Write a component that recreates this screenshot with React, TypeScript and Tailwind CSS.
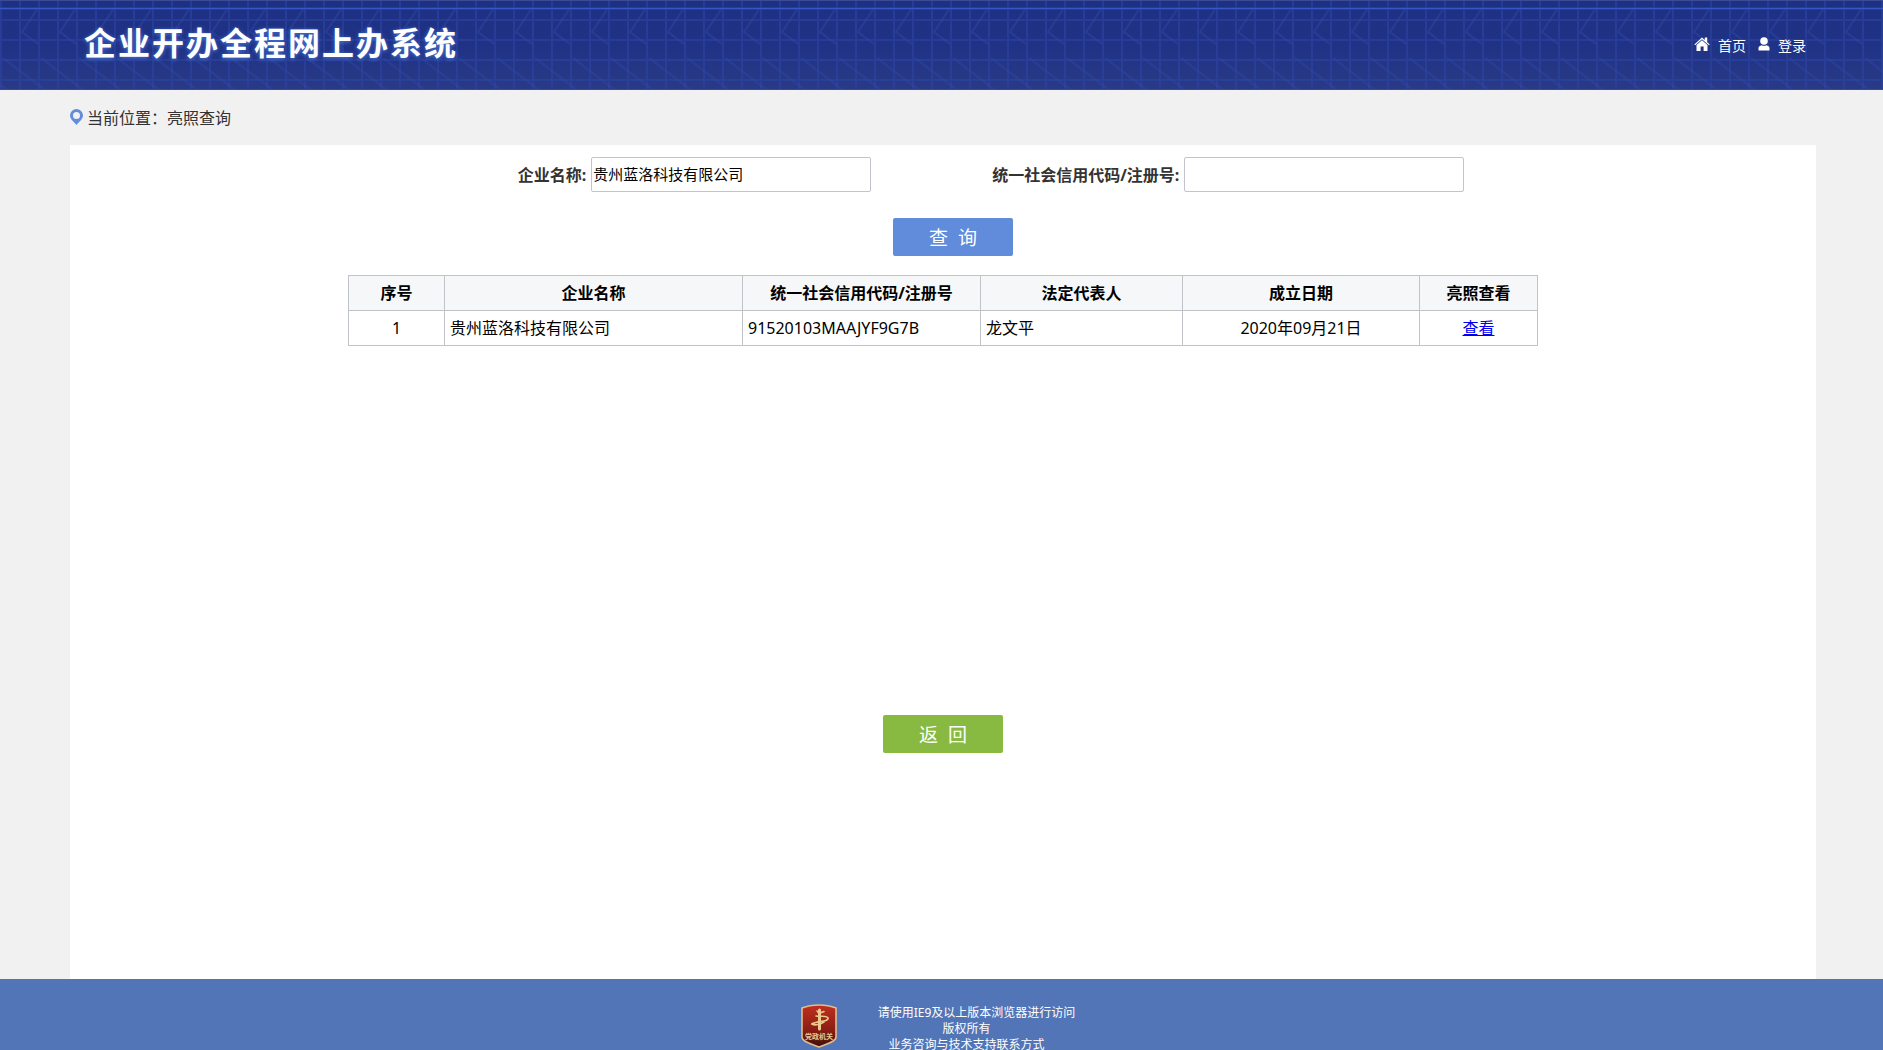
import React, { useState } from "react"

const rows = [
  {
    name: "贵州蓝洛科技有限公司",
    code: "91520103MAAJYF9G7B",
    person: "龙文平",
    date: "2020年09月21日"
  }
]

const HeaderPattern: React.FC = () => (
  <svg className="absolute inset-0 w-full h-full" aria-hidden="true">
    <defs>
      <linearGradient id="sky" x1="0" y1="0" x2="0" y2="1">
        <stop offset="0" stopColor="#1d3082" />
        <stop offset="0.5" stopColor="#203285" />
        <stop offset="1" stopColor="#293a85" />
      </linearGradient>
      <pattern id="grid" width="38" height="90" patternUnits="userSpaceOnUse">
        <g stroke="#2b45a5" strokeWidth="2" fill="none">
          <path opacity="0.55" d="M1 0V90M20 0V90M0 20H38M0 40H38M0 60H38M0 80H38" />
          <path opacity="0.5" d="M38 8L22 32L38 44M3 58L45 90M-35 58L7 90" />
        </g>
      </pattern>
    </defs>
    <rect width="100%" height="90" fill="url(#sky)" />
    <rect width="100%" height="90" fill="url(#grid)" />
    <rect width="100%" height="1" fill="#3a4c98" />
    <rect y="7" width="100%" height="3" fill="#2a45a8" opacity="0.6" />
    <rect y="8" width="100%" height="1" fill="#3558c4" />
    <rect y="89" width="100%" height="1" fill="#3a4796" />
  </svg>
)

const HomeIcon: React.FC = () => (
  <svg className="mb-1" width="16" height="14" viewBox="0 0 16 14" fill="#fff" aria-hidden="true">
    <path d="M0.3 7.4L8 0.6L10.8 3V0.4H13.2V5.2L15.7 7.4L14.9 8.2L8 2.2L1.1 8.2Z" />
    <path d="M2.5 8L8 3.3L13.5 8V14H9.6V9.4H6.6V14H2.5Z" />
  </svg>
)

const UserIcon: React.FC = () => (
  <svg className="mb-1" width="12" height="14" viewBox="0 0 12 14" fill="#fff" aria-hidden="true">
    <circle cx="6" cy="4" r="3.8" />
    <path d="M0.5 13.5V11C0.5 9.4 2 8.6 3.6 8.2C5 9 7 9 8.4 8.2C10 8.6 11.5 9.4 11.5 11V13.5Z" />
  </svg>
)

const PinIcon: React.FC = () => (
  <svg className="mb-0.5" width="13" height="16" viewBox="0 0 13 16" aria-hidden="true">
    <path
      fill="#638ddc"
      fillRule="evenodd"
      d="M6.5 0A6.5 6.5 0 0 0 0 6.5C0 10 4 13 6.5 16C9 13 13 10 13 6.5A6.5 6.5 0 0 0 6.5 0ZM6.5 3A3.5 3.5 0 1 1 6.5 10A3.5 3.5 0 1 1 6.5 3Z"
    />
  </svg>
)

const Emblem: React.FC = () => (
  <svg width="38" height="44" viewBox="0 0 38 44" role="img" aria-label="党政机关">
    <defs>
      <linearGradient id="shield" x1="0" y1="0" x2="0" y2="1">
        <stop offset="0" stopColor="#c0301f" />
        <stop offset="0.6" stopColor="#8a1d14" />
        <stop offset="1" stopColor="#3c0f0a" />
      </linearGradient>
    </defs>
    <path
      d="M19 1C25 1 31 2 36 4V33C36 38 26 40 19 43C12 40 2 38 2 33V4C7 2 13 1 19 1Z"
      fill="url(#shield)"
      stroke="#e0bd8b"
      strokeWidth="1.6"
    />
    <g fill="none" stroke="#ecc98f" strokeLinecap="round">
      <path d="M19.5 6V25" strokeWidth="3" />
      <path d="M17 7C18 9 21 9 24 7.5" strokeWidth="1.6" />
      <path d="M16 12C21 13 26 11 28 14C29 18 16 17 12 20" strokeWidth="1.6" />
      <path d="M12 20C15 22 21 20 24 18" strokeWidth="1.6" />
    </g>
    <text x="19" y="34.5" textAnchor="middle" fontSize="7" fontWeight="700" fill="#ecc98f">
      党政机关
    </text>
  </svg>
)

const App: React.FC = () => {
  const [name, setName] = useState<string>("贵州蓝洛科技有限公司")
  const [code, setCode] = useState<string>("")

  return (
    <div className="flex flex-col min-h-screen bg-[#f1f1f1] text-base text-black font-['Noto_Sans','Noto_Sans_CJK_SC',sans-serif]">
      <header className="relative h-[90px] bg-[#203285]">
        <HeaderPattern />
        <div className="relative flex justify-between h-full pl-[84px] pr-[77px]">
          <h1 className="pt-5 text-[32px] leading-[46px] font-bold tracking-[2px] text-white [text-shadow:0_1px_4px_#4a7be0]">
            企业开办全程网上办系统
          </h1>
          <nav className="flex items-center gap-3 pt-0.5 text-sm text-white">
            <a href="#home" className="flex items-center gap-2">
              <HomeIcon />
              首页
            </a>
            <a href="#login" className="flex items-center gap-2">
              <UserIcon />
              登录
            </a>
          </nav>
        </div>
      </header>

      <div className="flex items-center gap-1 h-[55px] px-[70px] text-[#333]">
        <PinIcon />
        <span>当前位置：亮照查询</span>
      </div>

      <main className="flex flex-col items-center ml-[70px] mr-[67px] min-h-[834px] bg-white">
        <form className="flex flex-col items-center w-full" onSubmit={(e) => e.preventDefault()}>
          <div className="flex items-center justify-center gap-[121px] pl-24 pt-3">
            <div className="flex items-center gap-[5px]">
              <label htmlFor="name" className="font-bold text-[#333]">
                企业名称:
              </label>
              <input
                id="name"
                className="w-[280px] h-[35px] px-px pb-0.5 border border-[#c3c4ca] rounded-xs text-[15px]"
                value={name}
                onChange={(e) => setName(e.target.value)}
              />
            </div>
            <div className="flex items-center gap-[5px]">
              <label htmlFor="code" className="font-bold text-[#333]">
                统一社会信用代码/注册号:
              </label>
              <input
                id="code"
                className="w-[280px] h-[35px] px-px pb-0.5 border border-[#c3c4ca] rounded-xs text-[15px]"
                value={code}
                onChange={(e) => setCode(e.target.value)}
              />
            </div>
          </div>
          <button
            type="submit"
            className="w-[120px] h-[38px] mt-[26px] ml-5 pt-0.5 rounded-xs bg-[#618cdc] text-[19px] text-white whitespace-pre"
          >
            查  询
          </button>
        </form>

        <table className="w-[1190px] mt-[19px] table-fixed border-collapse">
          <colgroup>
            <col className="w-[96px]" />
            <col className="w-[298px]" />
            <col className="w-[238px]" />
            <col className="w-[202px]" />
            <col className="w-[237px]" />
            <col className="w-[118px]" />
          </colgroup>
          <thead>
            <tr className="h-[35px] bg-[#f6f7f9]">
              <th className="border border-[#c0c3c8]">序号</th>
              <th className="border border-[#c0c3c8]">企业名称</th>
              <th className="border border-[#c0c3c8]">统一社会信用代码/注册号</th>
              <th className="border border-[#c0c3c8]">法定代表人</th>
              <th className="border border-[#c0c3c8]">成立日期</th>
              <th className="border border-[#c0c3c8]">亮照查看</th>
            </tr>
          </thead>
          <tbody>
            {rows.map((row, i) => (
              <tr key={row.code} className="h-[35px]">
                <td className="border border-[#c0c3c8] text-center">{i + 1}</td>
                <td className="border border-[#c0c3c8] px-[5px]">{row.name}</td>
                <td className="border border-[#c0c3c8] px-[5px]">{row.code}</td>
                <td className="border border-[#c0c3c8] px-[5px]">{row.person}</td>
                <td className="border border-[#c0c3c8] text-center">{row.date}</td>
                <td className="border border-[#c0c3c8] text-center">
                  <a href="#view" className="text-[#0000ee] underline">
                    查看
                  </a>
                </td>
              </tr>
            ))}
          </tbody>
        </table>

        <button
          type="button"
          className="w-[120px] h-[38px] mt-auto mb-[226px] pt-0.5 rounded-xs bg-[#88b940] text-[19px] text-white whitespace-pre"
        >
          返  回
        </button>
      </main>

      <footer className="flex justify-center items-start gap-10 h-[71px] pt-[25px] pr-2 overflow-hidden bg-[#5175b7] text-xs leading-4 text-white text-center">
        <Emblem />
        <div className="pt-px">
          <p>请使用IE9及以上版本浏览器进行访问</p>
          <p className="pr-5">版权所有</p>
          <p className="pr-5">业务咨询与技术支持联系方式</p>
        </div>
      </footer>
    </div>
  )
}

export default App
